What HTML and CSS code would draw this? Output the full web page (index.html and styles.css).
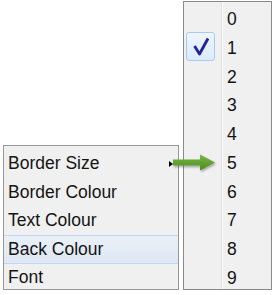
FILE: index.html
```html
<!DOCTYPE html>
<html lang="en">
<head>
  <meta charset="UTF-8">
  <meta name="viewport" content="width=device-width, initial-scale=1.0">
  <title>Menu</title>
  <link rel="stylesheet" href="styles.css">
</head>
<body>
  <div class="scene">
    <ul class="menu">
      <li class="item has-sub">Border Size<span class="sub-arrow"></span></li>
      <li class="item">Border Colour</li>
      <li class="item">Text Colour</li>
      <li class="item hot">Back Colour</li>
      <li class="item">Font</li>
    </ul>

    <div class="submenu">
      <div class="gutter">
        <div class="check">
          <svg width="28" height="28" viewBox="0 0 28 28">
            <polyline points="7.5,13 12.5,21 21,5.5" fill="none" stroke="#23239a" stroke-width="2.8" stroke-linejoin="round"/>
          </svg>
        </div>
      </div>
      <ul class="values">
        <li>0</li>
        <li>1</li>
        <li>2</li>
        <li>3</li>
        <li>4</li>
        <li>5</li>
        <li>6</li>
        <li>7</li>
        <li>8</li>
        <li>9</li>
      </ul>
    </div>

    <!-- callout arrow from "Border Size" to "5" -->
    <svg class="pointer" width="60" height="30" viewBox="0 0 60 30">
      <defs>
        <linearGradient id="g" x1="0" y1="0" x2="0" y2="1">
          <stop offset="0" stop-color="#7ab846"/>
          <stop offset="1" stop-color="#4c8c1e"/>
        </linearGradient>
        <filter id="sh" x="-20%" y="-30%" width="140%" height="170%">
          <feDropShadow dx="1" dy="1.5" stdDeviation="1" flood-color="#000" flood-opacity="0.35"/>
        </filter>
      </defs>
      <path d="M8 9.5 H35 V4.5 L50 12.5 L35 20.5 V15.5 H8 Z" fill="url(#g)" filter="url(#sh)"/>
    </svg>
  </div>
</body>
</html>
```

FILE: styles.css
```css
*,*::before,*::after{
  margin: 0;
  padding: 0;
  box-sizing: border-box;
}
body{
  background: #fff;
  font-family: "Liberation Sans", Arial, sans-serif;
  font-size: 17.5px;
  color: #141414;
}
ul{
  list-style: none;
}

.scene{
  position: relative;
  display: flex;
  align-items: flex-end;
  gap: 4px;
  padding: 1px 0 0 3px;
  height: 290px;
}

/* main menu */
.menu{
  width: 176px;
  height: 145px;
  padding-top: 3.5px;
  background: #f0f0f0;
  border: 1px solid #979797;
  overflow: hidden;
}
.menu .item{
  display: flex;
  align-items: center;
  justify-content: space-between;
  height: 28.5px;
  padding-left: 4px;
}
.menu .item.hot{
  background: linear-gradient(#eaf0f8, #dde7f3);
  border-top: 1px solid #c2d8f2;
  border-bottom: 1px solid #c2d8f2;
}
.sub-arrow{
  width: 0;
  height: 0;
  margin-right: 5px;
  border-left: 4px solid #000;
  border-top: 3.5px solid transparent;
  border-bottom: 3.5px solid transparent;
}

/* submenu with numbers */
.submenu{
  display: flex;
  width: 89px;
  height: 289px;
  background: #f0f0f0;
  border: 1px solid #8a8a8a;
  overflow: hidden;
}
.gutter{
  width: 38px;
  padding: 30px 0 0 2px;
  border-right: 1px solid #e0e0e0;
  box-shadow: 1px 0 0 #fff;
}
.check{
  width: 29px;
  height: 29px;
  border: 1px solid #a6cbf3;
  border-radius: 3px;
  background: linear-gradient(#eef5fd, #dcebfc);
}
.check svg{
  display: block;
}
.values{
  padding: 3px 0 0 5px;
}
.values li{
  height: 28.75px;
  line-height: 28.75px;
}

.pointer{
  position: absolute;
  left: 165px;
  top: 150px;
}
```
